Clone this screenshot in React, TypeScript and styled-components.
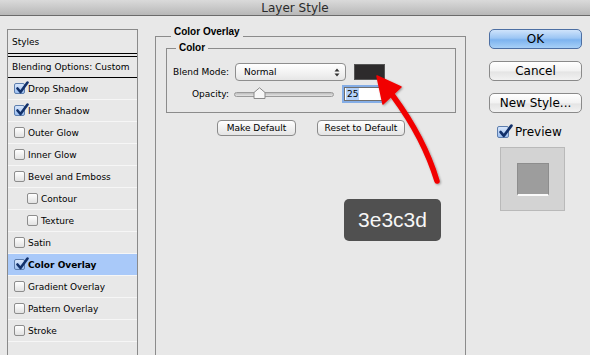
import styled, { createGlobalStyle } from "styled-components";

const GlobalStyle = createGlobalStyle`
  html, body { margin: 0; padding: 0; background: #e8e8e8; }
`;

const styleItems = [
  { label: "Drop Shadow", checked: true },
  { label: "Inner Shadow", checked: true },
  { label: "Outer Glow" },
  { label: "Inner Glow" },
  { label: "Bevel and Emboss" },
  { label: "Contour", nested: true },
  { label: "Texture", nested: true },
  { label: "Satin" },
  { label: "Color Overlay", checked: true, selected: true },
  { label: "Gradient Overlay" },
  { label: "Pattern Overlay" },
  { label: "Stroke" },
];

function Check({ checked, size = 11 }: { checked?: boolean; size?: number }) {
  return (
    <SBox $size={size} $checked={checked}>
      {checked && (
        <SCheckMark viewBox="0 0 14 14" width={size + 3} height={size + 3}>
          <path d="M2.5 7.5 L5.5 11 L12.5 1.5" fill="none" stroke="#12316b" strokeWidth="2.6" strokeLinecap="round" strokeLinejoin="round" />
        </SCheckMark>
      )}
    </SBox>
  );
}

export default function App() {
  return (
    <>
      <GlobalStyle />
      <SWindow>
        <STitleBar>Layer Style</STitleBar>
        <SBody>
          <SStyles>
            <SStylesHead>Styles</SStylesHead>
            <SBlending>Blending Options: Custom</SBlending>
            {styleItems.map((it) => (
              <SStyleRow key={it.label} $nested={it.nested} $selected={it.selected}>
                <Check checked={it.checked} />
                <span>{it.label}</span>
              </SStyleRow>
            ))}
          </SStyles>

          <SGroup>
            <SLegend>Color Overlay</SLegend>
            <SInnerGroup>
              <SInnerLegend>Color</SInnerLegend>
              <SGrid>
                <SLabel>Blend Mode:</SLabel>
                <SControls $gap={8}>
                  <SSelect>
                    <span>Normal</span>
                    <svg width="6" height="9" viewBox="0 0 6 9">
                      <path d="M0.5 3.5 L3 0.5 L5.5 3.5 Z M0.5 5.5 L3 8.5 L5.5 5.5 Z" fill="#333" />
                    </svg>
                  </SSelect>
                  <SSwatch />
                </SControls>
                <SLabel>Opacity:</SLabel>
                <SControls $gap={10}>
                  <SSlider>
                    <SThumb viewBox="0 0 13 12" width="13" height="12">
                      <path d="M1 11.5 V5.5 L6.5 0.8 L12 5.5 V11.5 Z" fill="#f7f7f7" stroke="#8a8a8a" />
                    </SThumb>
                  </SSlider>
                  <SInput>
                    <SSelected>25</SSelected>
                  </SInput>
                  <SPercent>%</SPercent>
                </SControls>
              </SGrid>
            </SInnerGroup>
            <SButtonRow>
              <SSmallButton $w={79}>Make Default</SSmallButton>
              <SSmallButton $w={88}>Reset to Default</SSmallButton>
            </SButtonRow>
          </SGroup>

          <SSide>
            <SButton $primary>OK</SButton>
            <SButton>Cancel</SButton>
            <SButton>New Style...</SButton>
            <SPreviewRow>
              <Check checked size={12} />
              <span>Preview</span>
            </SPreviewRow>
            <SPreviewBox>
              <SPreviewSquare />
            </SPreviewBox>
          </SSide>
        </SBody>

        <SArrow viewBox="0 0 590 355" width="590" height="355">
          <defs>
            <filter id="sh" x="-20%" y="-20%" width="140%" height="140%">
              <feDropShadow dx="1" dy="1" stdDeviation="0.8" floodColor="#000" floodOpacity="0.35" />
            </filter>
          </defs>
          <g filter="url(#sh)">
            <path d="M437 181 Q424 138 393 96" fill="none" stroke="#f10000" strokeWidth="5.5" strokeLinecap="round" />
            <path d="M377 76 L401 87 L383 104 Z" fill="#f10000" stroke="#f10000" strokeWidth="1.5" strokeLinejoin="round" />
          </g>
        </SArrow>
        <SBadge>3e3c3d</SBadge>
      </SWindow>
    </>
  );
}

const SWindow = styled.div`
  position: relative;
  width: 590px;
  height: 355px;
  overflow: hidden;
  background: #e8e8e8;
  font-family: "DejaVu Sans", "Liberation Sans", sans-serif;
  font-size: 9px;
  color: #000;
`;

const STitleBar = styled.div`
  height: 15px;
  border-bottom: 1px solid #6b6b6b;
  background: linear-gradient(#dadada, #b8b8b8);
  display: flex;
  align-items: center;
  justify-content: center;
  font-size: 12px;
  color: #2a2a2a;
`;

const SBody = styled.div`
  display: flex;
  align-items: flex-start;
  padding: 13px 0 0 7px;
`;

const SStyles = styled.div`
  width: 131px;
  height: 340px;
  box-sizing: border-box;
  border: 1px solid #8a8a8a;
  border-bottom: none;
  flex-shrink: 0;
`;

const SStylesHead = styled.div`
  height: 23px;
  display: flex;
  align-items: center;
  padding-left: 4px;
  border-bottom: 4px double #000;
`;

const SBlending = styled.div`
  height: 20px;
  display: flex;
  align-items: center;
  padding-left: 4px;
  border-bottom: 1px solid #000;
`;

const SStyleRow = styled.div<{ $nested?: boolean; $selected?: boolean }>`
  height: 21px;
  display: flex;
  align-items: center;
  gap: 3px;
  padding-left: ${(p) => (p.$nested ? 19 : 6)}px;
  border-bottom: 1px solid #f6f6f6;
  background: ${(p) => (p.$selected ? "#a9c9f9" : "transparent")};
  font-weight: ${(p) => (p.$selected ? 600 : 400)};
`;

const SBox = styled.span<{ $size: number; $checked?: boolean }>`
  position: relative;
  width: ${(p) => p.$size}px;
  height: ${(p) => p.$size}px;
  box-sizing: border-box;
  border: 1px solid ${(p) => (p.$checked ? "#5d7eae" : "#8d8d8d")};
  border-radius: 2px;
  background: ${(p) =>
    p.$checked ? "linear-gradient(#d8e6fb, #9cc0f2)" : "linear-gradient(#ffffff, #e2e2e2)"};
  flex-shrink: 0;
`;

const SCheckMark = styled.svg`
  position: absolute;
  left: 0;
  top: -3px;
`;

const SGroup = styled.fieldset`
  margin: -2px 0 0 17px;
  width: 311px;
  height: 345px;
  box-sizing: border-box;
  border: 1px solid #8b8b8b;
  padding: 0 9px 0 10px;
  flex-shrink: 0;
`;

const SLegend = styled.legend`
  margin-left: 5px;
  padding: 0 3px 8px;
  line-height: 10px;
  font-family: "Liberation Sans", sans-serif;
  font-weight: bold;
  font-size: 10px;
`;

const SInnerGroup = styled.fieldset`
  margin: -4px 0 0;
  border: 1px solid #8b8b8b;
  padding: 8px 0 11px 6px;
`;

const SInnerLegend = styled(SLegend)`
  margin-left: 3px;
  padding: 0 3px;
  line-height: 14px;
`;

const SGrid = styled.div`
  display: grid;
  grid-template-columns: 56px auto;
  column-gap: 6px;
  row-gap: 6px;
  align-items: center;
`;

const SLabel = styled.span`
  text-align: right;
  white-space: nowrap;
`;

const SControls = styled.div<{ $gap: number }>`
  display: flex;
  align-items: center;
  gap: ${(p) => p.$gap}px;
`;

const SSelect = styled.div`
  width: 111px;
  height: 18px;
  box-sizing: border-box;
  border: 1px solid #8e8e8e;
  border-radius: 4px;
  background: linear-gradient(#ffffff, #f1f1f1 60%, #e6e6e6);
  display: flex;
  align-items: center;
  justify-content: space-between;
  padding: 0 5px 0 8px;
`;

const SSwatch = styled.div`
  width: 31px;
  height: 16px;
  box-sizing: border-box;
  border: 1px solid #555;
  background: #2d2b2c;
`;

const SSlider = styled.div`
  position: relative;
  width: 100px;
  height: 5px;
  margin-left: -1px;
  box-sizing: border-box;
  border: 1px solid #9a9a9a;
  border-radius: 3px;
  background: linear-gradient(#bdbdbd, #e4e4e4);
`;

const SThumb = styled.svg`
  position: absolute;
  left: 18px;
  top: -6px;
`;

const SInput = styled.div`
  width: 39px;
  height: 14px;
  box-sizing: border-box;
  border: 1px solid #6e6e6e;
  background: #fff;
  box-shadow: 0 0 0 2px #84ade6;
  display: flex;
  align-items: center;
  padding-left: 1px;
`;

const SSelected = styled.span`
  background: #b4d1f8;
  padding: 0 1px;
  line-height: 12px;
`;

const SPercent = styled.span`
  margin-left: -8px;
`;

const SButtonRow = styled.div`
  display: flex;
  justify-content: center;
  gap: 21px;
  margin-top: 7px;
`;

const SSmallButton = styled.div<{ $w: number }>`
  width: ${(p) => p.$w}px;
  height: 16px;
  box-sizing: border-box;
  border: 1px solid #8a8a8a;
  border-radius: 4px;
  background: linear-gradient(#ffffff, #f0f0f0 55%, #e4e4e4);
  display: flex;
  align-items: center;
  justify-content: center;
`;

const SSide = styled.div`
  margin-left: 23px;
  width: 93px;
  display: flex;
  flex-direction: column;
  gap: 12px;
`;

const SButton = styled.div<{ $primary?: boolean }>`
  height: 20px;
  box-sizing: border-box;
  border: 1px solid ${(p) => (p.$primary ? "#4d6fa3" : "#8a8a8a")};
  border-radius: 5px;
  background: ${(p) =>
    p.$primary
      ? "linear-gradient(#cfe3fb, #9cc6f4 45%, #7db3ef 55%, #a7d0f7)"
      : "linear-gradient(#ffffff, #f2f2f2 50%, #e4e4e4 55%, #f2f2f2)"};
  display: flex;
  align-items: center;
  justify-content: center;
  font-size: 12px;
`;

const SPreviewRow = styled.div`
  height: 12px;
  margin-top: 1px;
  display: flex;
  align-items: center;
  gap: 6px;
  padding-left: 8px;
  font-size: 12px;
`;

const SPreviewBox = styled.div`
  margin: -3px 0 0 11px;
  width: 65px;
  height: 64px;
  box-sizing: border-box;
  border: 1px solid #b9b9b9;
  background: #d3d3d3;
  display: flex;
  align-items: center;
  justify-content: center;
`;

const SPreviewSquare = styled.div`
  width: 32px;
  height: 33px;
  box-sizing: border-box;
  border: 1px solid #8d8d8d;
  border-bottom: 2px solid #fafafa;
  background: #9d9d9d;
`;

const SArrow = styled.svg`
  position: absolute;
  left: 0;
  top: 0;
  pointer-events: none;
`;

const SBadge = styled.div`
  position: absolute;
  left: 344px;
  top: 199px;
  width: 97px;
  height: 42px;
  border-radius: 5px;
  background: #505050;
  color: #f6f6f6;
  display: flex;
  align-items: center;
  justify-content: center;
  font-family: "Liberation Sans", sans-serif;
  font-size: 21px;
`;
